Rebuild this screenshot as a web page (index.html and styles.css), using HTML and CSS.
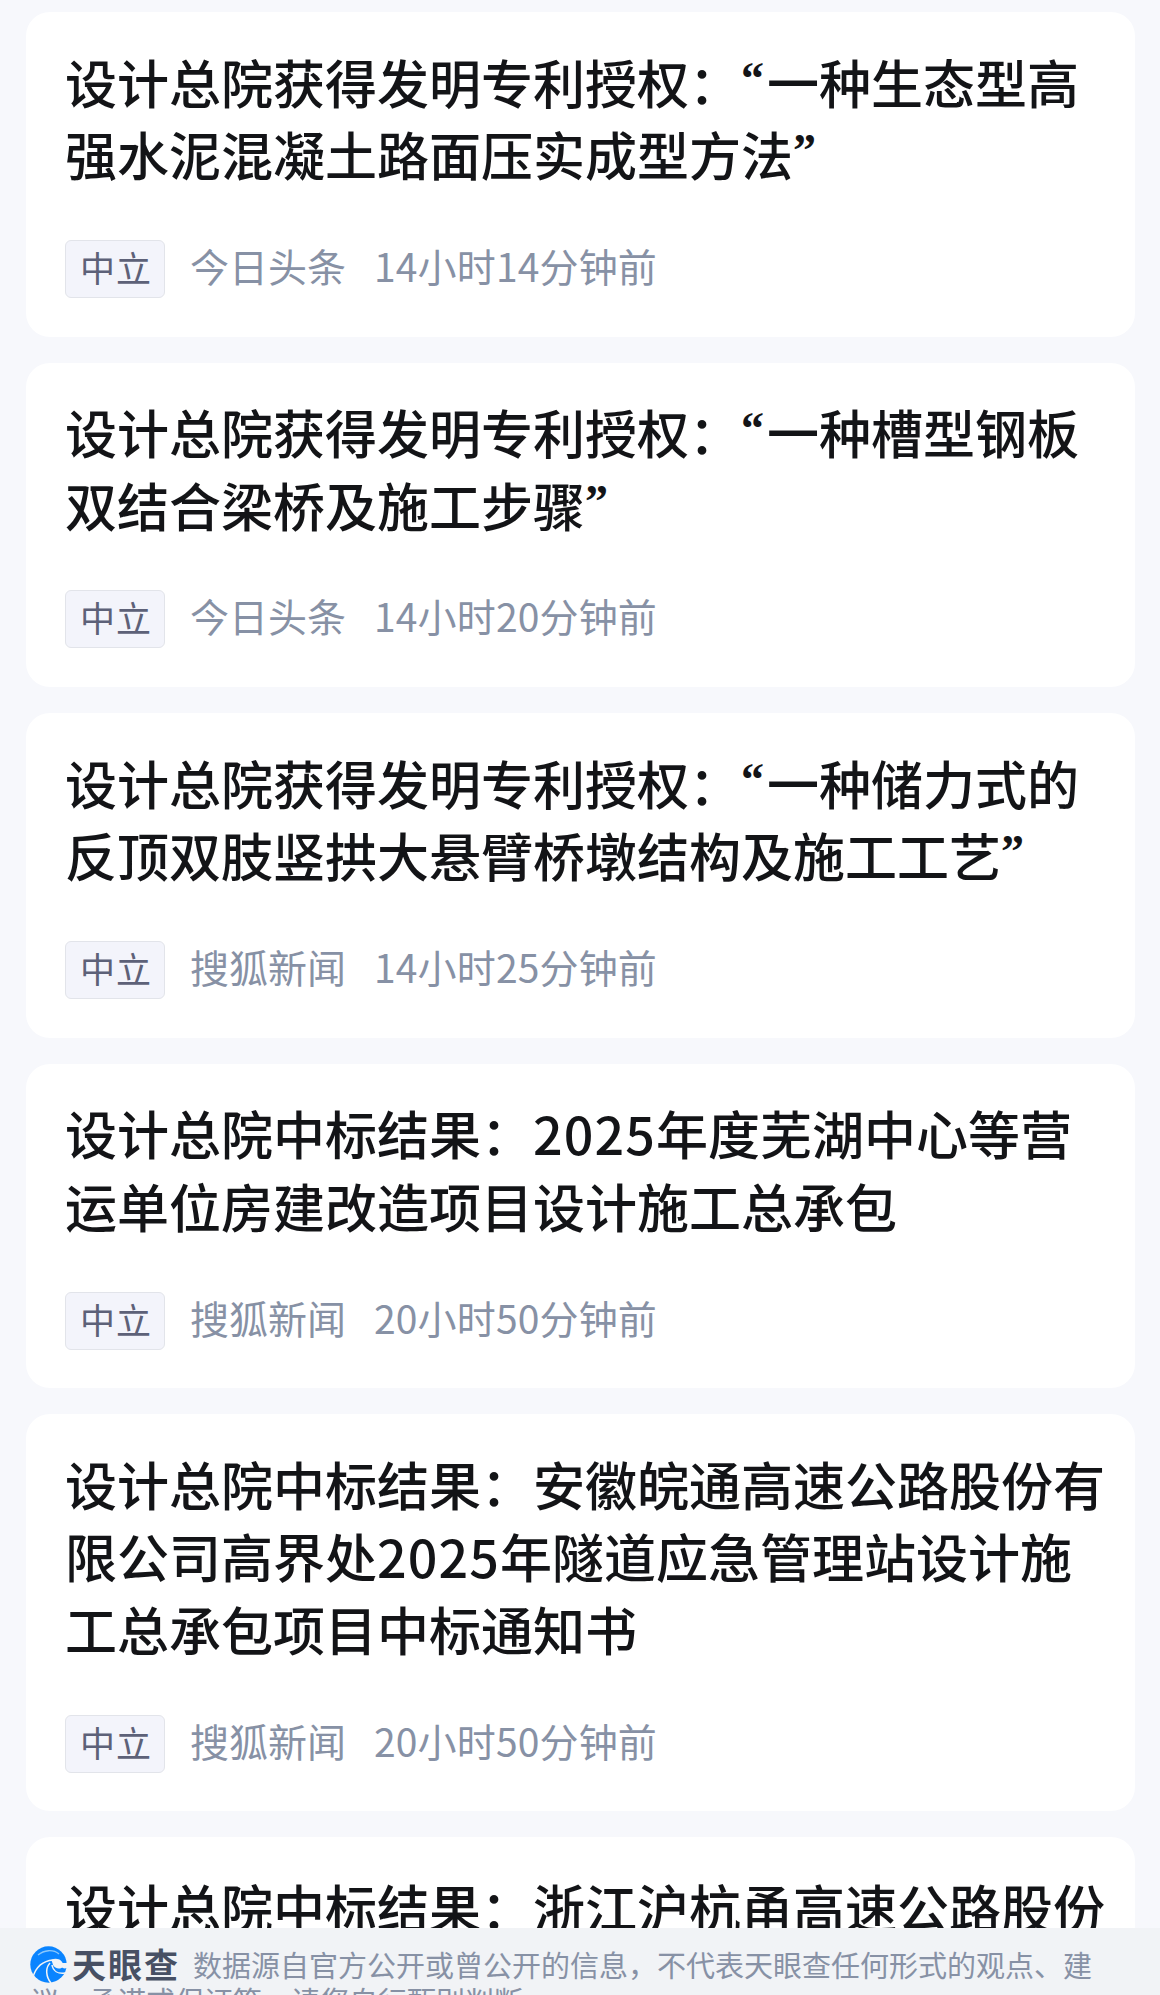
FILE: index.html
```html
<!DOCTYPE html>
<html lang="zh-CN">
  <head>
    <meta charset="UTF-8" />
    <meta name="viewport" content="width=device-width, initial-scale=1.0" />
    <title>天眼查</title>
    <link rel="stylesheet" href="styles.css">
  </head>

  <body>
    <div class="list">
      <div class="card">
        <h2>设计总院获得发明专利授权：<span class="quote">“</span>一种生态型高<br />强水泥混凝土路面压实成型方法<span class="quote">”</span></h2>
        <div class="info">
          <span class="tag">中立</span>
          <span class="source">今日头条</span>
          <span class="time">14小时14分钟前</span>
        </div>
      </div>

      <div class="card">
        <h2>设计总院获得发明专利授权：<span class="quote">“</span>一种槽型钢板<br />双结合梁桥及施工步骤<span class="quote">”</span></h2>
        <div class="info">
          <span class="tag">中立</span>
          <span class="source">今日头条</span>
          <span class="time">14小时20分钟前</span>
        </div>
      </div>

      <div class="card">
        <h2>设计总院获得发明专利授权：<span class="quote">“</span>一种储力式的<br />反顶双肢竖拱大悬臂桥墩结构及施工工艺<span class="quote">”</span></h2>
        <div class="info">
          <span class="tag">中立</span>
          <span class="source">搜狐新闻</span>
          <span class="time">14小时25分钟前</span>
        </div>
      </div>

      <div class="card">
        <h2>设计总院中标结果：<span class="num">2025</span>年度芜湖中心等营<br />运单位房建改造项目设计施工总承包</h2>
        <div class="info">
          <span class="tag">中立</span>
          <span class="source">搜狐新闻</span>
          <span class="time">20小时50分钟前</span>
        </div>
      </div>

      <div class="card">
        <h2>设计总院中标结果：安徽皖通高速公路股份有<br />限公司高界处<span class="num">2025</span>年隧道应急管理站设计施<br />工总承包项目中标通知书</h2>
        <div class="info">
          <span class="tag">中立</span>
          <span class="source">搜狐新闻</span>
          <span class="time">20小时50分钟前</span>
        </div>
      </div>

      <div class="card">
        <h2>设计总院中标结果：浙江沪杭甬高速公路股份</h2>
      </div>
    </div>

    <div class="footer">
      <div class="line">
        <svg class="logo" viewBox="0 0 37 37">
          <circle cx="18.5" cy="18.5" r="18.2" fill="#0a84ff" />
          <path d="M21 14C27 11 33 14 33.500 20C31 24 25 23 23 19C22.500 17 22 15 21 14Z" fill="#f1f3f6" />
          <path d="M31 17L37 17L37 22C34 23 32 22 31 20Z" fill="#f1f3f6" />
          <path d="M3 31C6 21 12 15 23 14M20 17C15 22 16 31 21 37M22 19C23 25 28 28 35 27" fill="none" stroke="#f1f3f6" stroke-width="1.500" />
          <path d="M8 9C14 4 23 3 29 8" fill="none" stroke="#8cc8fb" stroke-width="1.300" />
        </svg>
        <span class="brand">天眼查</span>
        <span>数据源自官方公开或曾公开的信息，不代表天眼查任何形式的观点、建</span>
      </div>
      <div class="line">议、承诺或保证等，请您自行甄别判断。</div>
    </div>
  </body>
</html>
```

FILE: styles.css
```css
body,
html {
  margin: 0;
  height: 1995px;
  overflow: hidden;
  font-family: "Noto Sans CJK SC", sans-serif;
  background-color: #f7f8fc;
}

body {
  display: flex;
  flex-direction: column;
}

.list {
  height: 1916px;
  padding: 12px 25px 0 26px;
  overflow: hidden;
}

.card {
  margin-bottom: 26px;
  padding: 33.5px 0 39px 39px;
  background-color: white;
  border-radius: 24px;
}

.card h2 {
  margin: 0 0 49.5px;
  font-size: 52px;
  font-weight: 500;
  line-height: 72.4px;
  color: #131417;
  white-space: nowrap;
}

.quote {
  font-family: "Liberation Serif", serif;
  font-size: 46px;
  font-weight: bold;
  line-height: 0;
  letter-spacing: 3px;
  vertical-align: 10px;
}

.num {
  letter-spacing: 1.1px;
}

.info {
  display: flex;
  height: 57.8px;
  font-size: 39px;
  line-height: 50px;
  color: #8791a5;
}

.tag {
  box-sizing: border-box;
  width: 100px;
  height: 58px;
  padding-left: 2px;
  border: 1px solid #e2e4ea;
  border-radius: 6px;
  background-color: #f3f4fb;
  color: #5d6178;
  font-size: 35px;
  line-height: 51px;
  letter-spacing: 1px;
  text-align: center;
}

.source {
  margin: 0 28px 0 25px;
}

.time {
  letter-spacing: 0.15px;
}

.footer {
  flex: 1;
  padding: 18px 0 0 30px;
  overflow: hidden;
  background-color: #f1f3f6;
  color: #8791a5;
  font-size: 29px;
  white-space: nowrap;
}

.line {
  display: flex;
  align-items: center;
  height: 36px;
  line-height: 36px;
}

.logo {
  width: 37px;
  height: 37px;
  margin: 1px 5px 0 0;
}

.brand {
  width: 121px;
  color: #475064;
  font-size: 34px;
  font-weight: bold;
  letter-spacing: 2px;
}
```
